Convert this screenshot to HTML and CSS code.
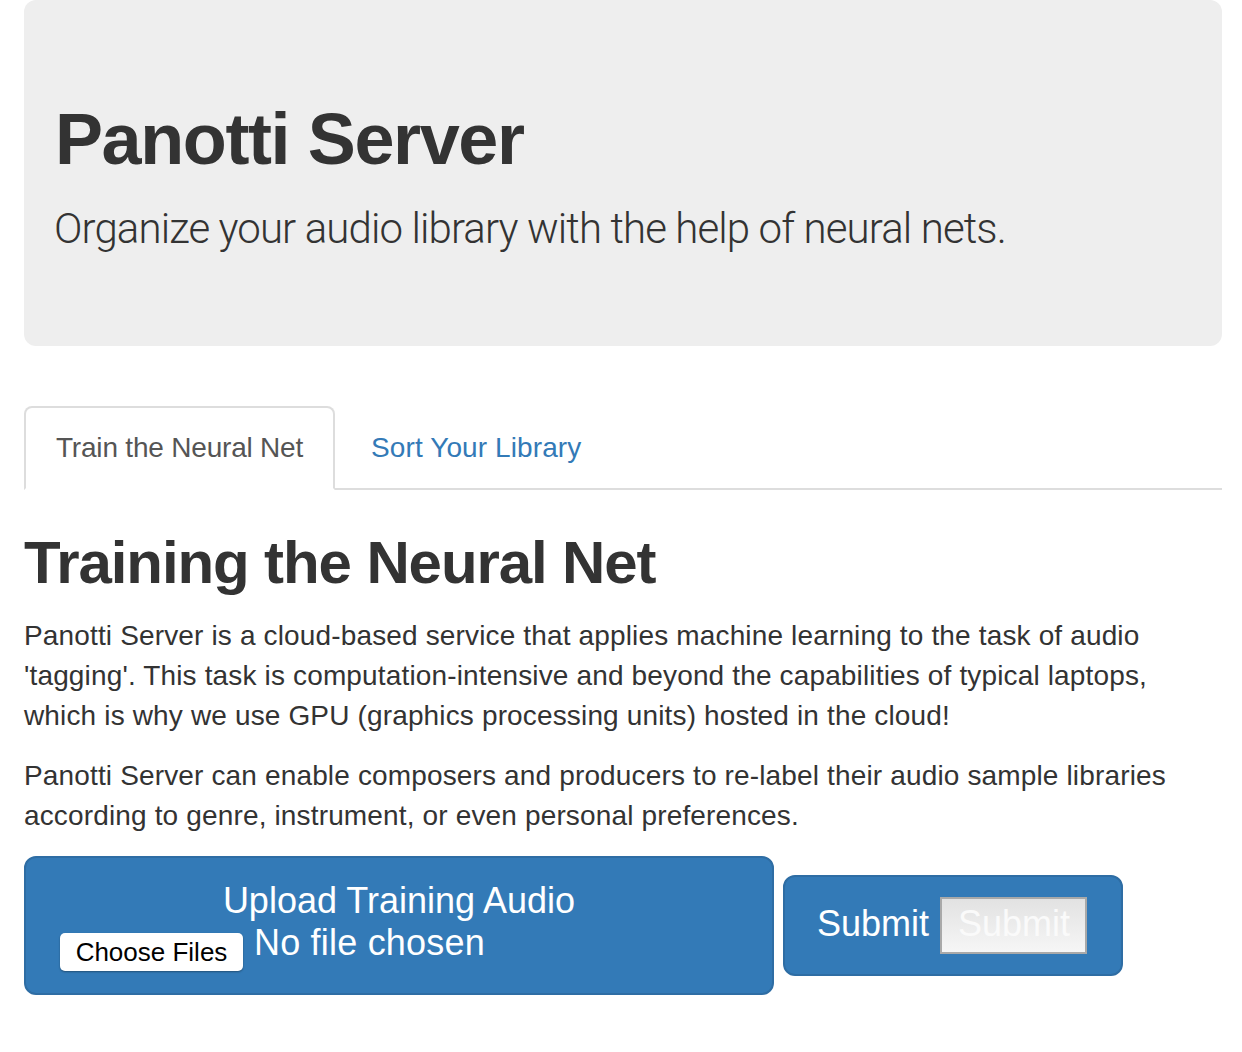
FILE: index.html
```html
<!DOCTYPE html>
<html lang="en">
<head>
<meta charset="utf-8">
<title>Panotti Server</title>
<link rel="stylesheet" href="styles.css">
</head>
<body>
<div class="page">
  <div class="jumbotron">
    <h1 class="title">Panotti Server</h1>
    <p class="lead">Organize your audio library with the help of neural nets.</p>
  </div>

  <ul class="nav-tabs">
    <li class="tab active"><a href="#train">Train the Neural Net</a></li>
    <li class="tab"><a href="#sort">Sort Your Library</a></li>
  </ul>

  <div class="tab-content">
    <h2 class="section-title">Training the Neural Net</h2>
    <p class="text">Panotti Server is a cloud-based service that applies machine learning to the task of audio 'tagging'. This task is computation-intensive and beyond the capabilities of typical laptops, which is why we use GPU (graphics processing units) hosted in the cloud!</p>
    <p class="text">Panotti Server can enable composers and producers to re-label their audio sample libraries according to genre, instrument, or even personal preferences.</p>

    <div class="form-row">
      <label class="btn upload">
        <span class="upload-title">Upload Training Audio</span>
        <span class="file-line">
          <span class="choose">Choose Files</span>
          <span class="no-file">No file chosen</span>
        </span>
      </label>
      <label class="btn submit">
        <span class="submit-text">Submit</span>
        <span class="submit-input">Submit</span>
      </label>
    </div>
  </div>
</div>
</body>
</html>
```

FILE: styles.css
```css
html, body {
  margin: 0;
  padding: 0;
  background: #fff;
}

body {
  font-family: "Liberation Sans", Arial, Helvetica, sans-serif;
  color: #333;
  font-size: 28px;
  line-height: 40px;
}

.page {
  padding: 0 20px 0 24px;
}

.jumbotron {
  background: #eeeeee;
  border-radius: 12px;
  padding: 60px 28px 57px 31px;
  margin-bottom: 60px;
}

.title {
  margin: 40px 0 20px;
  font-size: 72px;
  line-height: 79.2px;
  font-weight: 700;
  letter-spacing: -1.4px;
  color: #333;
}

.lead {
  margin: 0 0 30px -1px;
  font-family: Roboto, "Liberation Sans", sans-serif;
  font-weight: 300;
  font-size: 42px;
  line-height: 60px;
  letter-spacing: -0.9px;
  color: #333;
}

.nav-tabs {
  display: flex;
  margin: 0;
  padding: 0;
  list-style: none;
  border-bottom: 2px solid #ddd;
}

.tab {
  margin-bottom: -2px;
}

.tab a {
  display: block;
  padding: 20px 30px;
  line-height: 40px;
  margin-right: 4px;
  border: 2px solid transparent;
  border-radius: 8px 8px 0 0;
  color: #337ab7;
  text-decoration: none;
  letter-spacing: 0.1px;
}

.tab.active a {
  color: #555;
  background: #fff;
  border-color: #ddd #ddd transparent;
  letter-spacing: -0.2px;
}

.section-title {
  margin: 40px 0 20px;
  font-size: 60px;
  line-height: 66px;
  font-weight: 700;
  letter-spacing: -1.1px;
  color: #333;
}

.text {
  margin: 0 0 20px;
  letter-spacing: 0.15px;
}

.form-row {
  display: flex;
  align-items: center;
  gap: 9px;
}

.btn {
  background: #337ab7;
  border: 2px solid #2e6da4;
  border-radius: 12px;
  color: #fff;
  font-size: 36px;
  box-sizing: border-box;
}

.upload {
  width: 750px;
  padding: 20px 32px 22px;
  display: flex;
  flex-direction: column;
}

.upload-title {
  display: block;
  text-align: center;
  line-height: 45px;
}

.file-line {
  display: flex;
  align-items: flex-start;
  height: 48px;
}

.choose {
  margin: 10px 11px 0 2px;
  width: 183px;
  height: 38px;
  line-height: 38px;
  box-sizing: border-box;
  background: #fff;
  color: #000;
  font-size: 26px;
  text-align: center;
  border-radius: 5px;
  box-shadow: 0 1px 2px rgba(0, 0, 0, 0.35);
}

.no-file {
  line-height: 40px;
  letter-spacing: 0.2px;
}

.submit {
  width: 340px;
  padding: 20px 32px;
  display: flex;
  align-items: baseline;
}

.submit-text {
  line-height: 48px;
  margin-right: 11px;
}

.submit-input {
  display: block;
  border: 2px solid #a9a9a9;
  padding: 0 12px 4px 16px;
  line-height: 49px;
  width: 147px;
  box-sizing: border-box;
  background: linear-gradient(#e2e2e2, #f6f6f6);
  color: #fafafa;
}
```
